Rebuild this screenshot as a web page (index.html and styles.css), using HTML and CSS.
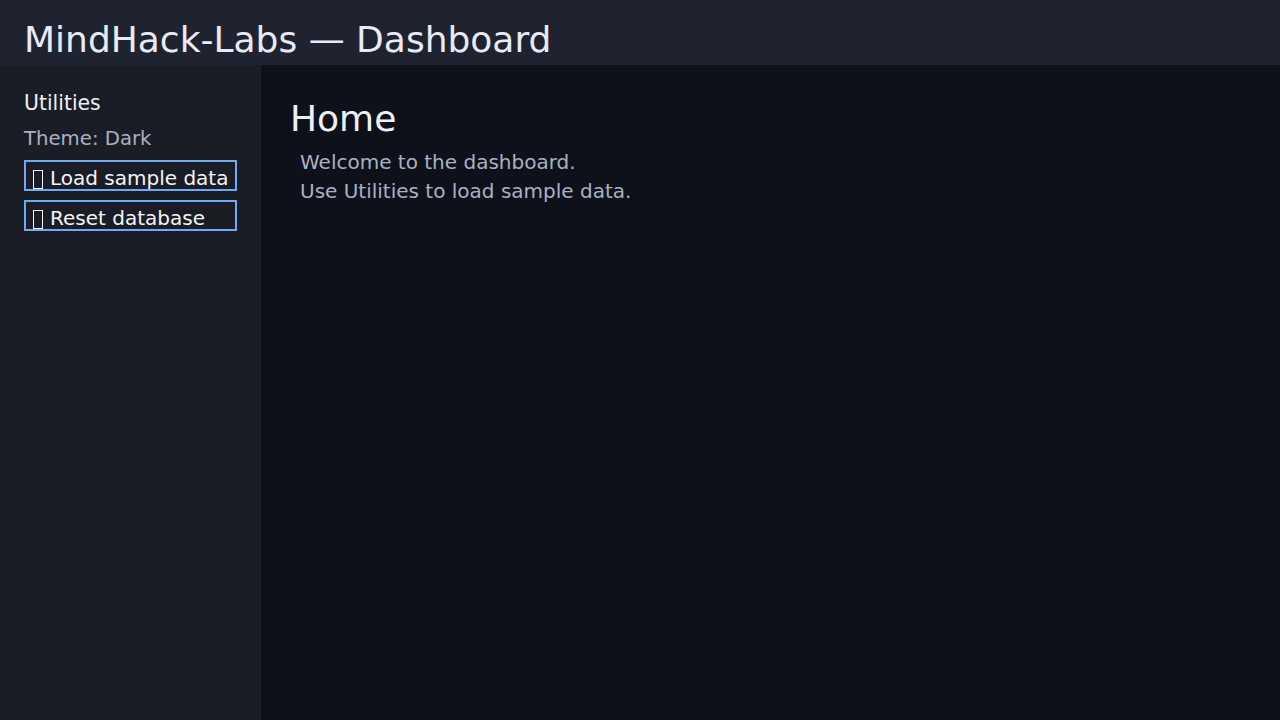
FILE: index.html
```html
<!DOCTYPE html>
<html lang="en">
<head>
<meta charset="utf-8">
<title>MindHack-Labs — Dashboard</title>
<link rel="stylesheet" href="styles.css">
</head>
<body>
<header class="topbar">
  <h1 class="title">MindHack-Labs — Dashboard</h1>
</header>
<div class="layout">
  <aside class="sidebar">
    <div class="side-heading">Utilities</div>
    <div class="theme">Theme: Dark</div>
    <button class="util-btn"><span class="tofu"></span> Load sample data</button>
    <button class="util-btn"><span class="tofu"></span> Reset database</button>
  </aside>
  <main class="content">
    <h2 class="page-title">Home</h2>
    <p class="line">Welcome to the dashboard.</p>
    <p class="line">Use Utilities to load sample data.</p>
  </main>
</div>
</body>
</html>
```
FILE: styles.css
```css
html, body {
  margin: 0;
  padding: 0;
  height: 100%;
}
body {
  font-family: "DejaVu Sans", sans-serif;
  background: #0e111a;
  color: #e8ebf2;
  display: flex;
  flex-direction: column;
}
.topbar {
  background: #1f2330;
  height: 65px;
  box-sizing: border-box;
  padding: 0 24px;
  display: flex;
  align-items: center;
  flex-shrink: 0;
}
.title {
  margin: 0;
  font-size: 36px;
  font-weight: normal;
  line-height: 42px;
  color: #e8ebf5;
  padding-top: 14px;
}
.layout {
  flex: 1;
  display: flex;
}
.sidebar {
  width: 261px;
  background: #1a1d26;
  box-sizing: border-box;
  padding: 25px 24px;
  display: flex;
  flex-direction: column;
  align-items: flex-start;
}
.side-heading {
  font-size: 20.4px;
  line-height: 26px;
  color: #eef0f5;
}
.theme {
  font-size: 19.7px;
  line-height: 26px;
  color: #a9b1c3;
  margin-top: 10px;
  margin-bottom: 8px;
}
.util-btn {
  font-family: "DejaVu Sans", sans-serif;
  font-size: 20px;
  line-height: 24px;
  height: 31px;
  width: 213px;
  box-sizing: border-box;
  background: transparent;
  color: #f2f4f8;
  border: 2px solid #72aaf0;
  border-radius: 0;
  padding: 4px 0 0 7px;
  margin: 0 0 9px 0;
  text-align: left;
  white-space: nowrap;
  overflow: visible;
  display: flex;
  align-items: flex-start;
}
.tofu {
  display: inline-block;
  width: 10px;
  height: 19px;
  box-sizing: border-box;
  border: 1px solid #f2f4f8;
  margin: 4px 7px 0 0;
  flex-shrink: 0;
}
.content {
  flex: 1;
  padding: 33px 29px;
}
.page-title {
  margin: 0 0 8px 0;
  font-size: 36px;
  font-weight: normal;
  line-height: 42px;
  color: #eef0f6;
}
.line {
  margin: 0 0 0 10px;
  font-size: 20px;
  line-height: 29px;
  color: #a9b1c3;
}
```
